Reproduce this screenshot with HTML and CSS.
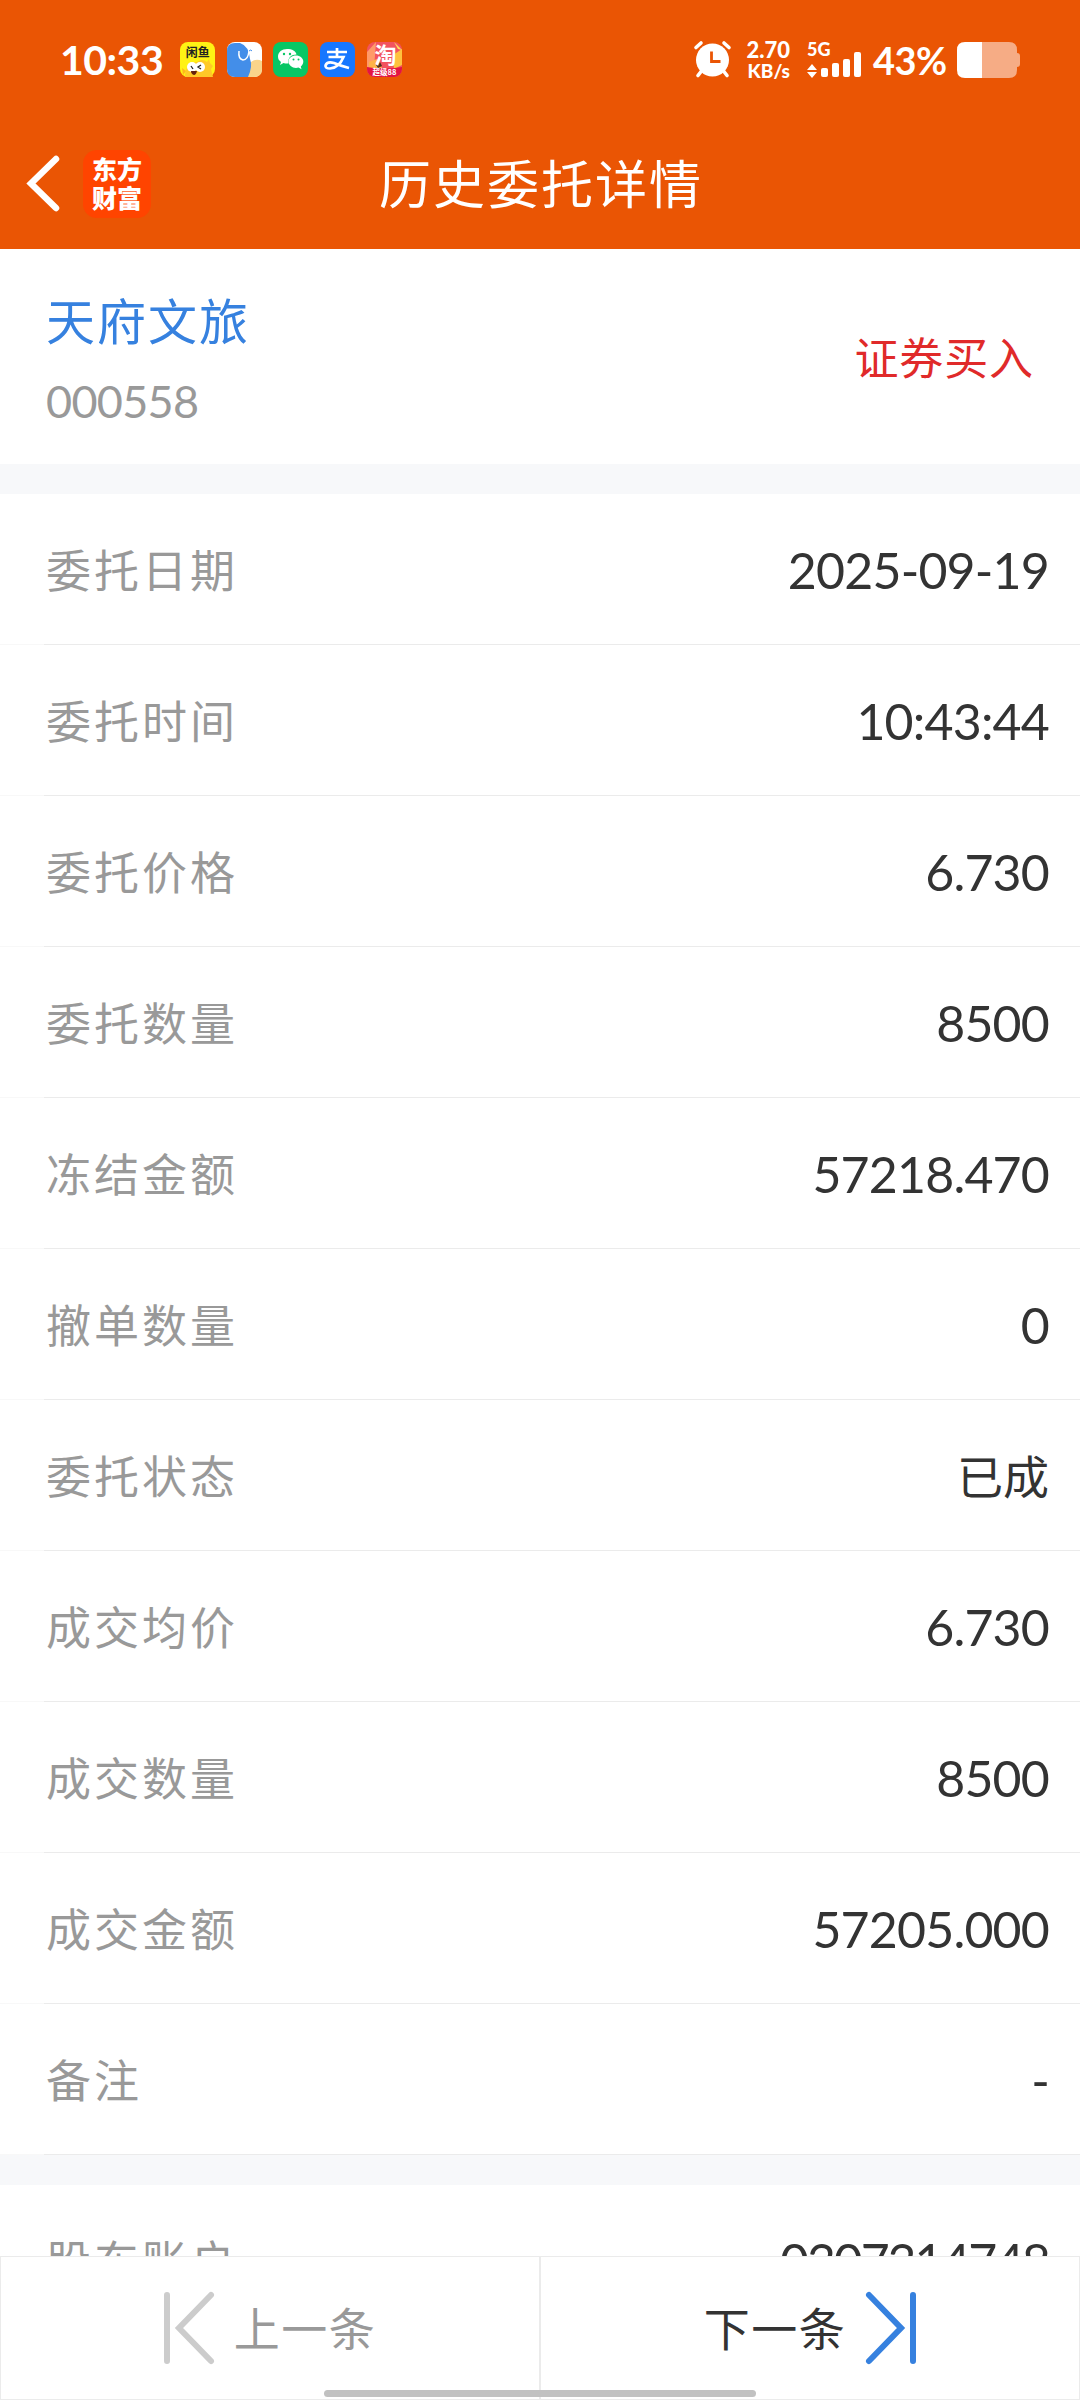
FILE: index.html
```html
<!DOCTYPE html>
<html lang="zh-CN">
<head>
<meta charset="UTF-8">
<meta name="viewport" content="width=device-width, initial-scale=1.0">
<title>历史委托详情</title>
<link rel="stylesheet" href="styles.css">
</head>
<body>

<header class="header">
    <!-- 状态栏 -->
    <div class="status-bar">
        <span class="clock">10:33</span>
        <div class="notices">
            <svg viewBox="0 0 35 35">
                <rect width="35" height="35" rx="8" fill="#fff214"/>
                <path d="M5 35q0-14 12-15 5-4 10 0l2-3 1 4 3 3-2 3 2 8z" fill="#ffc928"/>
                <path d="M2 26l4 3-3 4z" fill="#ffb51f"/>
                <circle cx="12" cy="25" r="5" fill="#fff"/>
                <circle cx="20" cy="25" r="5" fill="#fff"/>
                <path d="M11 24l2 3M21 23l-3 2 3 2" stroke="#222" stroke-width="1.3" fill="none"/>
                <path d="M11 29h6q-1 4-3 4-3-1-3-4z" fill="#65210e"/>
                <text x="17.8" y="15" class="t-fish">闲鱼</text>
            </svg>
            <svg viewBox="0 0 35 35">
                <rect width="35" height="35" rx="8" fill="#fff"/>
                <path d="M24 20q5-4 11-1v8q0 8-8 8h-7z" fill="#f9d48a"/>
                <path d="M8 1h5q9 3 10 16 3 7-2 18H8q-8 0-8-8V9q0-8 8-8z" fill="#438ee9"/>
                <path d="M12 9q-1 8 4 9 5 0 6-9" stroke="#fff" stroke-width="1.5" fill="none"/>
                <path d="M22 9q2-2 3 0" stroke="#438ee9" fill="none"/>
            </svg>
            <svg viewBox="0 0 35 35">
                <rect width="35" height="35" rx="8" fill="#07c765"/>
                <path d="M14 7c-5 0-9 3-9 7.500 0 2.500 1 4 3 5.500l-1 3 3.500-2q2 .7 5 .5c-1-6 3-9 8-9C23 9 19 7 14 7z" fill="#fff"/>
                <path d="M23 13.500c-4 0-7.500 2.500-7.500 6s3.500 6.500 7.500 6.500l2.500-.4 3 1.600-.7-2.600c1.500-1.200 2.500-3 2.500-5 0-3.500-3.300-6.100-7.300-6.100z" fill="#fff"/>
                <g fill="#07c765"><circle cx="11" cy="12" r="1.200"/><circle cx="17" cy="12" r="1.200"/><circle cx="20.500" cy="17.500" r="1"/><circle cx="25.500" cy="17.500" r="1"/></g>
            </svg>
            <svg viewBox="0 0 35 35">
                <rect width="35" height="35" rx="8" fill="#1777ff"/>
                <path d="M7 10h20M17 6v9M8.500 15h15Q19 26 10 26.500q-5 0-4.500-3Q7 19 14 21q7 3 15 5" stroke="#fff" stroke-width="2.700" fill="none"/>
            </svg>
            <svg viewBox="0 0 35 35">
                <defs><clipPath id="round"><rect width="35" height="35" rx="8"/></clipPath></defs>
                <g clip-path="url(#round)">
                    <rect width="35" height="35" fill="#f2535f"/>
                    <path d="M0 10L9 0 7 26H0z" fill="#ff9a69"/>
                    <path d="M26 13l9-6v16l-8 4z" fill="#ffc13e"/>
                    <path d="M27 0l8 8-4-1z" fill="#ffe05a"/>
                    <path d="M2 20l8-3 5 9H2z" fill="#ffb347"/>
                    <path d="M9 23l4-3 2 4-4 2z" fill="#50301c"/>
                    <path d="M0 25q17 3 35 0v10H0z" fill="#e31444"/>
                </g>
                <text x="18.5" y="20.5" class="t-tao">淘</text>
                <text x="17.5" y="33" class="t-sale">超级88</text>
            </svg>
        </div>
        <svg class="alarm" viewBox="0 0 37 37">
            <path d="M2 6.500L7 2M35 6.500L30 2M7.500 30L4 34.500M29.500 30l3.500 4.500" stroke="#fff" stroke-width="3.600" stroke-linecap="round"/>
            <circle cx="18.500" cy="19" r="16.500" fill="#fff"/>
            <path d="M17.500 10.500v10h9" stroke="#ea5504" stroke-width="2.800" fill="none"/>
        </svg>
        <div class="speed"><span>2.70</span><span>KB/s</span></div>
        <div class="signal">
            <span>5G</span>
            <svg viewBox="0 0 54 26">
                <path d="M0 18l5-6 5 6zM0 20h10l-5 6z" fill="#fff"/>
                <g fill="#fff"><rect x="14" y="16" width="7" height="9" rx="2"/><rect x="25" y="11" width="7" height="14" rx="2"/><rect x="36" y="7" width="7" height="18" rx="2"/><rect x="47" y="0" width="7" height="25" rx="2"/></g>
            </svg>
        </div>
        <span class="percent">43%</span>
        <svg class="battery" viewBox="0 0 63 36">
            <path d="M25 0h27q8 0 8 8v3q3 0 3 3v8q0 3-3 3v3q0 8-8 8H25z" fill="#f6ac85"/>
            <path d="M25 0H8Q0 0 0 8v20q0 8 8 8h17z" fill="#fff"/>
        </svg>
    </div>

    <!-- 标题栏 -->
    <div class="nav-bar">
        <div class="nav-left">
            <svg class="back" viewBox="0 0 32 56"><path d="M29 3L4 27.500 29 52" stroke="#fff" stroke-width="6.500" stroke-linecap="round" fill="none"/></svg>
            <div class="logo"><span>东方财富</span></div>
        </div>
        <h1>历史委托详情</h1>
    </div>
</header>

<section class="stock">
    <div>
        <h2>天府文旅</h2>
        <p>000558</p>
    </div>
    <span class="side">证券买入</span>
</section>

<section class="group">
    <div class="row"><label>委托日期</label><span>2025-09-19</span></div>
    <div class="row"><label>委托时间</label><span>10:43:44</span></div>
    <div class="row"><label>委托价格</label><span>6.730</span></div>
    <div class="row"><label>委托数量</label><span>8500</span></div>
    <div class="row"><label>冻结金额</label><span>57218.470</span></div>
    <div class="row"><label>撤单数量</label><span>0</span></div>
    <div class="row"><label>委托状态</label><span class="cn">已成</span></div>
    <div class="row"><label>成交均价</label><span>6.730</span></div>
    <div class="row"><label>成交数量</label><span>8500</span></div>
    <div class="row"><label>成交金额</label><span>57205.000</span></div>
    <div class="row"><label>备注</label><span>-</span></div>
</section>

<section class="group">
    <div class="row"><label>股东账户</label><span class="tight">0307314748</span></div>
</section>

<!-- 底部翻页 -->
<footer class="pager">
    <div class="page prev">
        <svg viewBox="0 0 50 72"><path d="M3 3v66M47 3L15 36l32 33" stroke="#ccc" stroke-width="6" stroke-linecap="round" fill="none"/></svg>
        <span>上一条</span>
    </div>
    <div class="page next">
        <span>下一条</span>
        <svg viewBox="0 0 50 72"><path d="M47 3v66M3 3l32 33L3 69" stroke="#3681df" stroke-width="6" stroke-linecap="round" fill="none"/></svg>
    </div>
    <i class="home-bar"></i>
</footer>

</body>
</html>
```
FILE: styles.css
```css
* {
    box-sizing: border-box;
    margin: 0;
    padding: 0;
}

body {
    height: 2400px;
    overflow: hidden;
    background: #f7f8fa;
    color: #333;
    font-family: Lato, "Noto Sans CJK SC", sans-serif;
}

svg {
    display: block;
    flex: none;
    overflow: visible;
}

/* --- 顶部 --- */
.header {
    height: 249px;
    background: #ea5504;
    color: #fff;
}

.status-bar {
    display: flex;
    align-items: center;
    height: 119px;
    padding: 0 60px;
}

.clock {
    width: 120px;
    font-size: 41px;
    font-weight: 700;
    letter-spacing: -0.5px;
}

.notices {
    display: flex;
    gap: 11.700px;
}

.notices svg {
    width: 35px;
    height: 35px;
}

.notices text {
    text-anchor: middle;
    font-family: "Noto Sans CJK SC", sans-serif;
    font-weight: 700;
    fill: #fff;
}

.notices .t-fish {
    font-size: 12px;
    fill: #222;
}

.notices .t-tao {
    font-size: 22px;
}

.notices .t-sale {
    font-size: 7.500px;
}

.alarm {
    width: 37px;
    height: 37px;
    margin-left: auto;
}

.speed {
    display: flex;
    flex-direction: column;
    width: 46px;
    margin-left: 13px;
    font-size: 22px;
    font-weight: 900;
    line-height: 21px;
    text-align: right;
    white-space: nowrap;
}

.speed span:last-child {
    font-size: 19px;
}

.signal {
    width: 54px;
    margin: 0 12px 0 17px;
    font-size: 18px;
    font-weight: 900;
    line-height: 16px;
}

.signal span {
    display: block;
    height: 11px;
}

.signal svg {
    width: 54px;
    height: 26px;
}

.percent {
    width: 84px;
    font-size: 38px;
    font-weight: 700;
    letter-spacing: -0.5px;
}

.battery {
    width: 63px;
    height: 36px;
}

.nav-bar {
    display: grid;
    grid-template-columns: 1fr auto 1fr;
    align-items: center;
    height: 130px;
    padding: 0 27px;
}

.nav-left {
    display: flex;
    align-items: center;
    gap: 24px;
}

.back {
    width: 32px;
    height: 56px;
}

.logo {
    width: 68px;
    height: 68px;
    padding: 4px 9px 0;
    border-radius: 14px;
    background: #ff4400;
    font-family: "Noto Sans CJK SC", sans-serif;
    font-size: 25px;
    font-weight: 900;
    line-height: 29px;
    word-break: break-all;
}

.nav-bar h1 {
    padding-left: 2px;
    font-size: 52px;
    font-weight: 400;
    letter-spacing: 2px;
    line-height: 76px;
}

/* --- 股票信息 --- */
.stock {
    display: flex;
    align-items: center;
    justify-content: space-between;
    height: 215px;
    padding: 0 46px;
    background: #fff;
}

.stock div {
    padding-top: 8px;
}

.stock h2 {
    color: #3681df;
    font-size: 49px;
    font-weight: 400;
    letter-spacing: 2px;
    line-height: 80px;
}

.stock p {
    color: #999;
    font-size: 45px;
    line-height: 80px;
    letter-spacing: -0.7px;
}

.side {
    padding-bottom: 2px;
    color: #e02a2a;
    font-size: 44px;
    letter-spacing: 0.900px;
}

/* --- 明细列表 --- */
.group {
    margin-top: 30px;
    background: #fff;
}

.row {
    display: flex;
    align-items: center;
    justify-content: space-between;
    height: 151px;
    padding: 0 31px 0 46px;
    border-bottom: 1px solid;
    border-image: linear-gradient(to right, #f8f8f8 45px, #ebebeb 45px) 1;
}

.row label {
    padding-bottom: 2px;
    color: #999;
    font-size: 45px;
    letter-spacing: 3px;
}

.row span {
    padding-top: 2px;
    font-size: 50px;
    letter-spacing: -0.8px;
}

/* 长账号收紧一点 */
.row .tight {
    letter-spacing: -2.100px;
}

.row .cn {
    padding: 0 0 2px;
    font-size: 46px;
    letter-spacing: 0;
}

/* --- 底部翻页 --- */
.pager {
    position: fixed;
    left: 0;
    right: 0;
    bottom: 0;
    display: flex;
    height: 144px;
    background: #fff;
}

.page {
    display: flex;
    flex: 1;
    align-items: center;
    justify-content: center;
    gap: 20px;
    border: 1px solid #ebebeb;
    font-size: 46px;
    letter-spacing: 1.500px;
}

.page span {
    padding-bottom: 4px;
}

.page svg {
    width: 50px;
    height: 72px;
}

.prev {
    color: #999;
}

.home-bar {
    position: absolute;
    left: 324px;
    bottom: 3px;
    width: 432px;
    height: 7px;
    border-radius: 4px;
    background: #c1c1c1;
}
```
